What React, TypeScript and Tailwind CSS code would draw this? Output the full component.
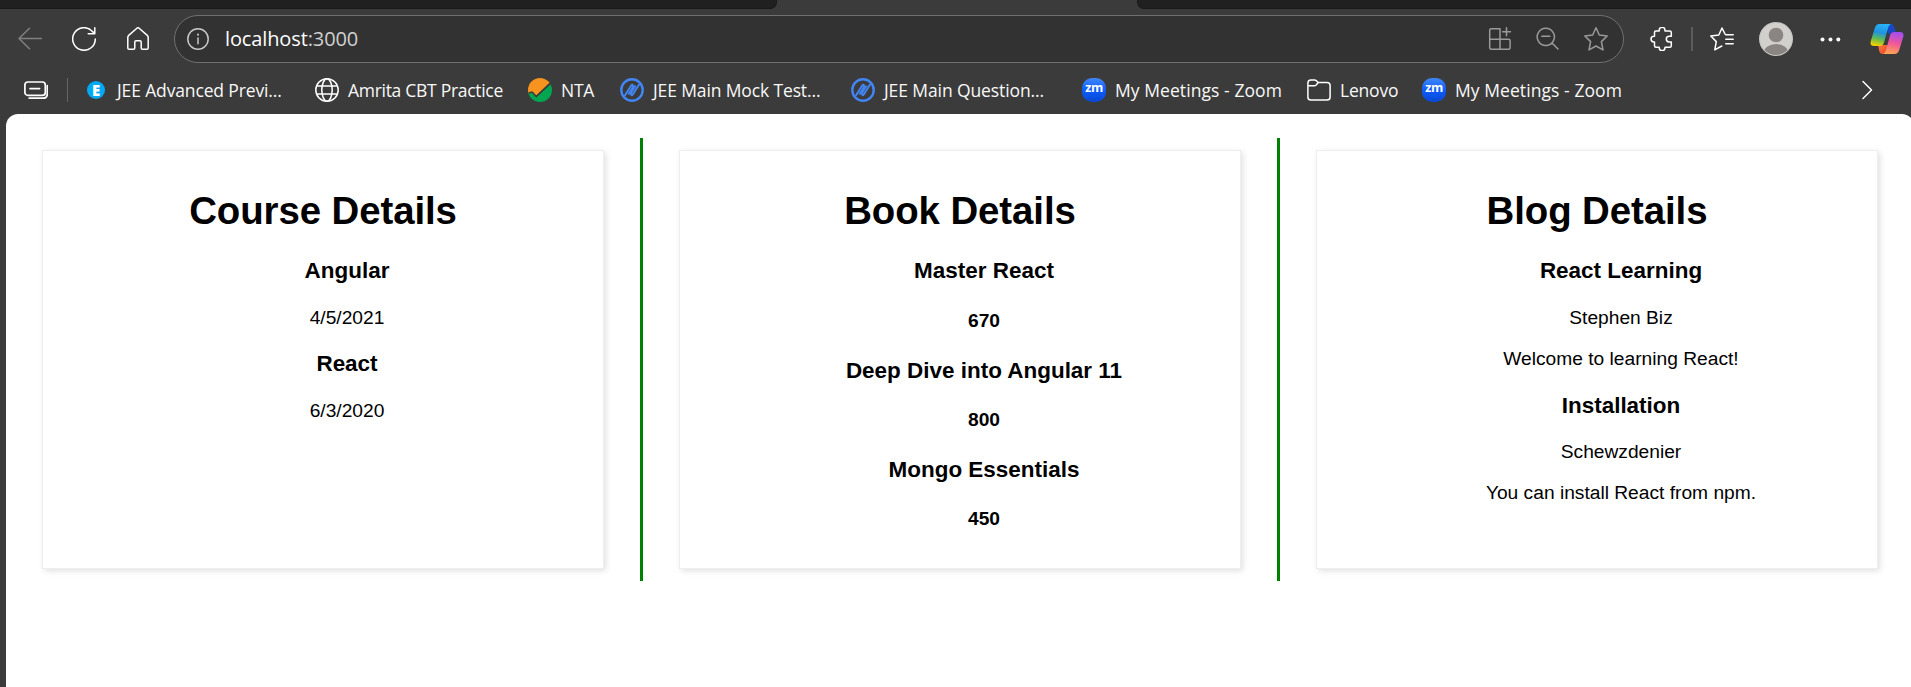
import type { ReactNode, SVGProps } from "react";

const UI_FONT = "font-['Open_Sans','Noto_Sans',sans-serif]";

function Icon({ children, ...rest }: SVGProps<SVGSVGElement> & { children: ReactNode }) {
  return (
    <svg
      width="24"
      height="24"
      viewBox="0 0 24 24"
      fill="none"
      stroke="currentColor"
      strokeWidth="1.5"
      strokeLinecap="round"
      strokeLinejoin="round"
      {...rest}
    >
      {children}
    </svg>
  );
}

const STAR = "M12 0.8 L15.3 8 L23.2 9 L17.4 14.6 L19 22.9 L12 19 L5 22.9 L6.6 14.6 L0.8 9 L8.7 8 Z";

function ExamFavicon() {
  return (
    <Icon strokeLinecap="butt">
      <circle cx="12" cy="12" r="10.7" stroke="#4285f4" strokeWidth="2.4" />
      <path d="M4.6 18 L11.2 7.6 Q12.6 5.8 13 8 Q13 9 12.4 10 L8.4 16.4" stroke="#4285f4" strokeWidth="1.9" />
      <path d="M19.4 6 L12.8 16.4 Q11.4 18.2 11 16 Q11 15 11.6 14 L15.6 7.6" stroke="#4285f4" strokeWidth="1.9" />
    </Icon>
  );
}

function ZoomFavicon() {
  return (
    <span className="flex h-6 w-6 items-center justify-center rounded-[10px] bg-linear-to-b from-[#4087fc] via-[#0b5cff] to-[#0a48cf] font-['Open_Sans',sans-serif] text-[12.5px] leading-none font-bold tracking-[-0.5px] text-white">
      <span className="-mt-1">zm</span>
    </span>
  );
}

function Bookmark({ icon, label, width, tracking }: { icon: ReactNode; label: string; width: string; tracking: string }) {
  return (
    <div className={`flex h-9 shrink-0 items-center gap-[9px] ${width}`}>
      <span className="flex h-6 w-6 shrink-0 items-center justify-center">{icon}</span>
      <span className={`whitespace-nowrap text-[17.5px] leading-6 text-[#f8f8f8] ${tracking}`}>{label}</span>
    </div>
  );
}

function TabStrip() {
  return (
    <div className="flex h-[9px] justify-between">
      <div className="w-[777px] rounded-br-[7px] border-r border-b border-[#191919] bg-[#202020]" />
      <div className="w-[774px] rounded-bl-[7px] border-b border-l border-[#191919] bg-[#202020]" />
    </div>
  );
}

function Toolbar() {
  return (
    <div className="flex h-[60px] items-center">
      <Icon className="ml-[18px] text-[#808080]">
        <path d="M23.5 11.5 H1 M11.5 1.3 L1 11.5 L11.5 21.7" />
      </Icon>
      <Icon className="ml-[30px] text-white">
        <path d="M23.3 12 A11.3 11.3 0 1 1 20.4 4.4 L22.8 6.8 M22.8 0.8 V6.8 H16.2" />
      </Icon>
      <Icon className="ml-[30px] text-white">
        <path d="M1.8 10.4 Q1.8 9.2 2.7 8.4 L10.9 1.2 Q12 0.3 13.1 1.2 L21.3 8.4 Q22.2 9.2 22.2 10.4 V21 Q22.2 22.3 20.9 22.3 H16.4 Q15.2 22.3 15.2 21 V15 Q15.2 13.7 13.9 13.7 H10.1 Q8.8 13.7 8.8 15 V21 Q8.8 22.3 7.6 22.3 H3.1 Q1.8 22.3 1.8 21 Z" />
      </Icon>

      <div className="ml-6 flex h-12 w-[1450px] shrink-0 items-center rounded-full border border-[#707070] bg-[#323232]">
        <Icon className="ml-[11px] text-[#c8c8c8]">
          <circle cx="12" cy="12" r="10.2" />
          <path d="M12 11 V16.8" />
          <path d="M12 7.6 V7.7" strokeWidth="2" />
        </Icon>
        <div className="ml-[15px] text-[20px] leading-7 tracking-[-0.12px] text-white">
          localhost<span className="text-[#d0d0d0]">:3000</span>
        </div>
        <div className="mr-[15px] ml-auto flex items-center gap-6 text-[#9a9a9a]">
          <Icon>
            <path d="M11.5 1.8 H3.2 Q1.7 1.8 1.7 3.3 V20.7 Q1.7 22.2 3.2 22.2 H20.6 Q22.1 22.2 22.1 20.7 V13.8 Q22.1 12.3 20.6 12.3 H1.7 M12 1.8 V22.2 M18.5 0.8 V8.8 M14.5 4.8 H22.5" />
          </Icon>
          <Icon>
            <path d="M9.8 1.2 A8.6 8.6 0 1 1 9.79 1.2 Z M5.8 9.3 H13.8 M16 16 L22 22" />
          </Icon>
          <Icon>
            <path d={STAR} />
          </Icon>
        </div>
      </div>

      <Icon className="ml-[26px] text-white">
        <path d="M4.5 5.2 Q4.5 3.9 5.8 3.9 H9.2 V3.2 A2.9 2.9 0 0 1 15 3.2 V3.9 H19.5 Q21.3 3.9 21.3 5.6 V9.2 H19.2 A2.9 2.9 0 0 0 19.2 15 H21.3 V18.8 Q21.3 20.3 19.8 20.3 H15 V20.8 A2.9 2.9 0 0 1 9.2 20.8 V20.3 H6 Q4.5 20.3 4.5 18.8 V15 H3.9 A2.9 2.9 0 0 1 3.9 9.2 H4.5 Z" />
      </Icon>
      <div className="ml-[17px] h-6 w-[2px] bg-[#5c5c5c]" />
      <Icon className="ml-[17px] text-white">
        <path d="M15.8 7.8 H23.2 M15.8 12.2 H23.2 M15.8 16.8 H23.2 M15 7 L12 1 L8.8 8 L0.8 9 L6.3 14.6 L4.8 22.8 L11.8 19" />
      </Icon>
      <svg className="ml-[25px]" width="34" height="34" viewBox="0 0 34 34">
        <clipPath id="avatar-clip">
          <circle cx="17" cy="17" r="16" />
        </clipPath>
        <circle cx="17" cy="17" r="17" fill="#c9c7c3" />
        <circle cx="17" cy="17" r="15.8" fill="#d2d0cc" />
        <circle cx="17" cy="13" r="7.3" fill="#8a8582" />
        <ellipse cx="17" cy="31.5" rx="12.5" ry="9.5" fill="#8a8582" clipPath="url(#avatar-clip)" />
      </svg>
      <svg className="ml-[26px]" width="24" height="24" viewBox="0 0 24 24" fill="white">
        <circle cx="3.5" cy="12.5" r="2" />
        <circle cx="11.5" cy="12.5" r="2" />
        <circle cx="19.3" cy="12.5" r="2" />
      </svg>
      <CopilotLogo />
    </div>
  );
}

function CopilotLogo() {
  return (
    <svg className="ml-[27px]" width="34" height="32" viewBox="0 0 34 32">
      <defs>
        <linearGradient id="cp-left" x1="0.6" y1="0" x2="0.4" y2="1">
          <stop offset="0" stopColor="#28b4f8" />
          <stop offset="0.4" stopColor="#1f93e0" />
          <stop offset="0.7" stopColor="#62bb50" />
          <stop offset="1" stopColor="#f5d000" />
        </linearGradient>
        <linearGradient id="cp-right" x1="0.6" y1="0" x2="0.4" y2="1">
          <stop offset="0" stopColor="#a24df0" />
          <stop offset="0.5" stopColor="#f0569a" />
          <stop offset="1" stopColor="#ffa650" />
        </linearGradient>
        <linearGradient id="cp-bottom" x1="0" y1="0" x2="1" y2="1">
          <stop offset="0" stopColor="#ff7a3c" />
          <stop offset="1" stopColor="#e8402e" />
        </linearGradient>
      </defs>
      <path d="M16 1 H20.5 Q23.4 1 24.3 4 L25.8 9 H24 Q21 9 20 12 L17.5 9 Z" fill="#1747c4" />
      <path d="M8.2 22 H18 L16.3 28 Q15.5 31 12.5 31 Q10 31 9.2 28 Z" fill="url(#cp-bottom)" />
      <path d="M9.5 1 H21 Q19 1.6 18.2 4.5 L14 19.5 Q13 23 10 23 H4 Q-0.5 23 0.8 18 L4.8 5 Q6 1 9.5 1 Z" fill="url(#cp-left)" />
      <path d="M24 9 H30 Q34.5 9 33.2 14 L29.2 27 Q28 31 24.5 31 H12.5 Q15 30.5 15.9 27.5 L20 12.5 Q21 9 24 9 Z" fill="url(#cp-right)" />
    </svg>
  );
}

function BookmarksBar() {
  return (
    <div className="flex h-[45px] items-start pt-[3px]">
      <div className="flex h-9 w-[84px] shrink-0 items-center">
        <Icon className="ml-6 text-white" strokeWidth="1.7">
          <rect x="0.9" y="4" width="20.4" height="13.4" rx="3" />
          <path d="M6 10.6 H15.6 M23.3 7.5 V15.8 Q23.3 20.2 19 20.2 H5.2" />
        </Icon>
        <div className="ml-[18.5px] h-6 w-px bg-[#646464]" />
      </div>
      <Bookmark
        width="w-[231px]"
        tracking="tracking-[-0.14px]"
        label="JEE Advanced Previ..."
        icon={
          <span className="flex h-[18px] w-[18px] items-center justify-center rounded-full bg-[#03a9f4] text-[15px] leading-none font-extrabold text-white">
            E
          </span>
        }
      />
      <Bookmark
        width="w-[213px]"
        tracking="tracking-[-0.29px]"
        label="Amrita CBT Practice"
        icon={
          <Icon className="text-white">
            <circle cx="12" cy="12" r="11.2" />
            <ellipse cx="12" cy="12" rx="5.2" ry="11.2" />
            <path d="M1.8 8 H22.2 M1.8 16 H22.2" />
          </Icon>
        }
      />
      <Bookmark
        width="w-[92px]"
        tracking="tracking-[-0.3px]"
        label="NTA"
        icon={
          <svg width="24" height="24" viewBox="0 0 24 24">
            <clipPath id="nta-clip">
              <circle cx="12" cy="12" r="12" />
            </clipPath>
            <g clipPath="url(#nta-clip)">
              <path d="M0 0 H24 V3 L8.2 17.6 L4.5 14 L0 16 Z" fill="#f7931e" />
              <path d="M0 15.5 L4 14.6 L8.2 19.6 L24 5 V24 H0 Z" fill="#00a550" />
              <path d="M0.5 15 L4.2 14 L8.2 18.4 L22.5 4.6" fill="none" stroke="#3b3b3b" strokeWidth="1.3" />
            </g>
          </svg>
        }
      />
      <Bookmark width="w-[231px]" tracking="tracking-[-0.13px]" label="JEE Main Mock Test..." icon={<ExamFavicon />} />
      <Bookmark width="w-[231px]" tracking="tracking-[-0.1px]" label="JEE Main Question..." icon={<ExamFavicon />} />
      <Bookmark width="w-[225px]" tracking="tracking-[0.07px]" label="My Meetings - Zoom" icon={<ZoomFavicon />} />
      <Bookmark
        width="w-[115px]"
        tracking="tracking-[-0.2px]"
        label="Lenovo"
        icon={
          <Icon className="text-white">
            <path d="M0.9 5 Q0.9 1.9 4 1.9 H7.6 Q8.6 1.9 9.4 2.7 L11.2 4.5 H20 Q23.1 4.5 23.1 7.6 V19 Q23.1 22.1 20 22.1 H4 Q0.9 22.1 0.9 19 Z M0.9 7.7 H7.4 Q8.4 7.7 9.2 7 L11.2 4.5" />
          </Icon>
        }
      />
      <Bookmark width="w-[200px]" tracking="tracking-[0.07px]" label="My Meetings - Zoom" icon={<ZoomFavicon />} />
      <div className="mr-[33px] ml-auto flex h-9 items-center text-white">
        <Icon>
          <path d="M9 3.5 L17.5 12 L9 20.5" />
        </Icon>
      </div>
    </div>
  );
}

function Panel({ title, children }: { title: string; children: ReactNode }) {
  return (
    <section className="w-[562px] border border-[#eeeeee] bg-white p-3 text-center shadow-[2.4px_2.4px_6px_rgba(0,0,0,0.12)]">
      <h1 className="my-[0.67em] text-[38.4px] leading-[normal] font-bold tracking-[-0.08px]">{title}</h1>
      <ul className="my-[19.2px] pl-12">{children}</ul>
    </section>
  );
}

function Heading({ children }: { children: ReactNode }) {
  return <h3 className="my-[1em] text-[22.46px] leading-[normal] font-bold">{children}</h3>;
}

function Text({ children }: { children: ReactNode }) {
  return <p className="my-[1em] text-[19.2px] leading-[normal]">{children}</p>;
}

const courses = [
  { name: "Angular", date: "4/5/2021" },
  { name: "React", date: "6/3/2020" },
];

const books = [
  { name: "Master React", price: 670 },
  { name: "Deep Dive into Angular 11", price: 800 },
  { name: "Mongo Essentials", price: 450 },
];

const blogs = [
  { title: "React Learning", author: "Stephen Biz", body: "Welcome to learning React!" },
  { title: "Installation", author: "Schewzdenier", body: "You can install React from npm." },
];

export default function App() {
  return (
    <div className={`flex h-[687px] w-[1911px] flex-col overflow-hidden bg-[#3b3b3b] ${UI_FONT}`}>
      <TabStrip />
      <Toolbar />
      <BookmarksBar />
      <main className="ml-[6px] w-[1908px] flex-1 rounded-t-xl bg-white pt-6 font-['Liberation_Sans',Arial,sans-serif] text-black">
        <div className="flex h-[443px]">
          <div className="flex w-[637px] border-r-[3px] border-[#008000] py-3 pl-9">
            <Panel title="Course Details">
              {courses.map((c) => (
                <li key={c.name} className="block">
                  <Heading>{c.name}</Heading>
                  <Text>{c.date}</Text>
                </li>
              ))}
            </Panel>
          </div>
          <div className="flex w-[637px] border-r-[3px] border-[#008000] py-3 pl-9">
            <Panel title="Book Details">
              {books.map((b) => (
                <li key={b.name} className="block">
                  <Heading>{b.name}</Heading>
                  <h4 className="my-[1.33em] text-[19.2px] leading-[normal] font-bold">{b.price}</h4>
                </li>
              ))}
            </Panel>
          </div>
          <div className="flex w-[634px] py-3 pl-9">
            <Panel title="Blog Details">
              {blogs.map((b) => (
                <li key={b.title} className="block">
                  <Heading>{b.title}</Heading>
                  <Text>{b.author}</Text>
                  <Text>{b.body}</Text>
                </li>
              ))}
            </Panel>
          </div>
        </div>
      </main>
    </div>
  );
}
